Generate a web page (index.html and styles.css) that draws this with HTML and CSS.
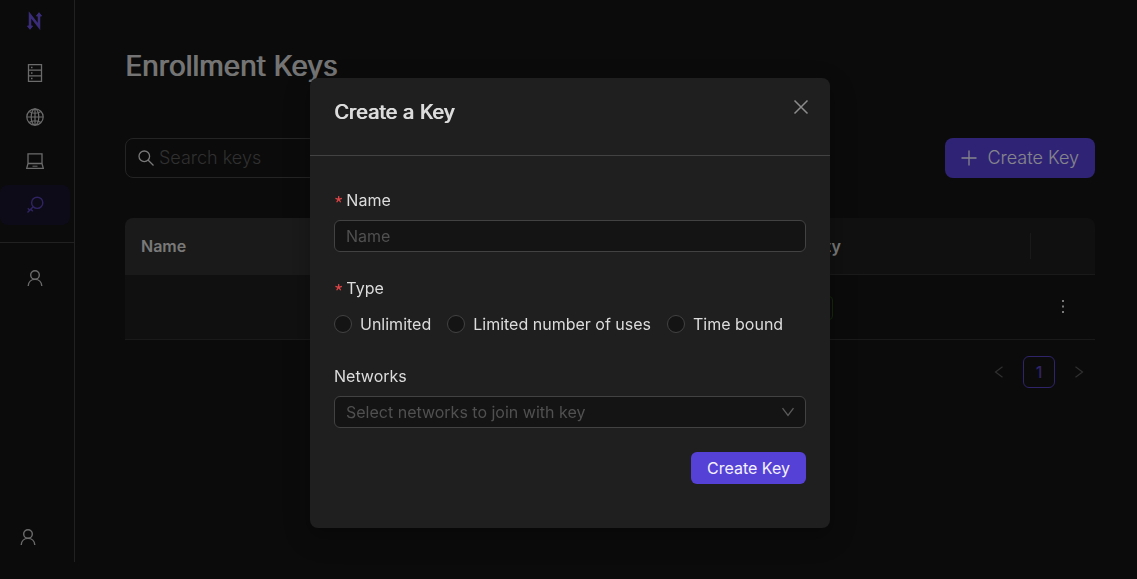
FILE: index.html
```
<!DOCTYPE html>
<html lang="en">
<head>
<meta charset="utf-8">
<title>Enrollment Keys</title>
<link rel="stylesheet" href="styles.css">
</head>
<body>
<div class="app">
  <nav class="sidebar" aria-label="Main">
    <a class="logo" href="#" aria-label="Home">
      <svg width="18" height="20" viewBox="0 0 18 20" fill="none" stroke="currentColor" stroke-width="2.500"><path d="M5 16V4L14 15.500V4"/><path d="M2.500 15L5 18.300L7.500 15zM11.500 5L14 1.700L16.500 5z" fill="currentColor" stroke-width="1"/></svg>
    </a>
    <ul class="menu">
      <li><a class="menu-item" href="#" aria-label="Hosts"><svg width="18" height="18" viewBox="0 0 18 18" fill="none" stroke="currentColor" stroke-width="1.300"><path d="M2.500 .7h13v16.600h-13zM2.500 6.200h13M2.500 11.800h13M5 3.500h1.500M5 9h1.500M5 14.500h1.500"/></svg></a></li>
      <li><a class="menu-item" href="#" aria-label="Networks"><svg width="18" height="18" viewBox="0 0 18 18" fill="none" stroke="currentColor" stroke-width="1.200"><circle cx="9" cy="9" r="8.200"/><ellipse cx="9" cy="9" rx="3.800" ry="8.200"/><path d="M9 1v16M1 9h16M3 3.500c3.500 2.300 8.500 2.300 12 0M3 14.500c3.500-2.300 8.500-2.300 12 0"/></svg></a></li>
      <li><a class="menu-item" href="#" aria-label="Clients"><svg width="18" height="18" viewBox="0 0 18 18" fill="none" stroke="currentColor" stroke-width="1.300"><path d="M2 11.500V1.800h14v9.700M2 11.500h14l1.300 4.800H.7z"/><path d="M6.500 14.200h5" stroke-width="1"/></svg></a></li>
      <li><a class="menu-item active" href="#" aria-label="Enrollment keys"><svg width="18" height="18" viewBox="0 0 18 18" fill="none" stroke="currentColor" stroke-width="1.400"><circle cx="11.200" cy="6.800" r="5.600"/><path d="M7.200 10.800l-5.700 5.700M4.800 13.200l2 2M1.800 12.200l2.200 2.200"/></svg></a></li>
    </ul>
    <ul class="menu users">
      <li><a class="menu-item" href="#" aria-label="Users"><svg width="18" height="18" viewBox="0 0 18 18" fill="none" stroke="currentColor" stroke-width="1.400"><circle cx="9" cy="6" r="4.300"/><path d="M2.200 17c.2-4 3-6.600 6.800-6.600s6.600 2.600 6.800 6.600"/></svg></a></li>
    </ul>
    <a class="account" href="#" aria-label="Account"><svg width="18" height="18" viewBox="0 0 18 18" fill="none" stroke="currentColor" stroke-width="1.400"><circle cx="9" cy="6" r="4.300"/><path d="M2.200 17c.2-4 3-6.600 6.800-6.600s6.600 2.600 6.800 6.600"/></svg></a>
  </nav>
  <main class="content">
    <h1 class="page-title">Enrollment Keys</h1>
    <div class="toolbar">
      <label class="search">
        <svg width="16" height="16" viewBox="0 0 16 16" fill="none" stroke="currentColor" stroke-width="1.300"><circle cx="6.300" cy="6.300" r="5.300"/><path d="M10 10l5.500 5.500"/></svg>
        <input type="search" placeholder="Search keys" aria-label="Search keys">
      </label>
      <button class="button large" type="button"><svg width="16" height="16" viewBox="0 0 16 16" fill="none" stroke="currentColor" stroke-width="1.300"><path d="M8 .5v15M.5 8h15"/></svg>Create Key</button>
    </div>
    <table class="keys">
      <colgroup><col><col class="col-validity"><col class="col-actions"></colgroup>
      <thead><tr><th class="sorted">Name</th><th>Validity</th><th class="split"></th></tr></thead>
      <tbody><tr><td class="sorted"></td><td><span class="tag">Valid</span></td><td class="actions"><button class="more" type="button" aria-label="More"><svg width="16" height="16" viewBox="0 0 16 16" fill="currentColor"><path d="M7 1h2v2H7zM7 6.500h2v2H7zM7 12h2v2H7z"/></svg></button></td></tr></tbody>
    </table>
    <div class="pagination">
      <button class="page" type="button" aria-label="Previous page"><svg width="12" height="12" viewBox="0 0 12 12" fill="none" stroke="currentColor" stroke-width="1.200"><path d="M9.500 .8L2.500 6l7 5.200"/></svg></button>
      <button class="page current" type="button">1</button>
      <button class="page" type="button" aria-label="Next page"><svg width="12" height="12" viewBox="0 0 12 12" fill="none" stroke="currentColor" stroke-width="1.200"><path d="M2.500 .8L9.500 6l-7 5.200"/></svg></button>
    </div>
  </main>
</div>

<div class="mask">
  <section class="modal" role="dialog" aria-labelledby="modal-title">
    <header class="modal-header">
      <h2 id="modal-title">Create a Key</h2>
      <button class="close" type="button" aria-label="Close"><svg width="16" height="16" viewBox="0 0 16 16" fill="none" stroke="currentColor" stroke-width="1.500"><path d="M1.500 1.500l13 13M14.500 1.500l-13 13"/></svg></button>
    </header>
    <form class="modal-body">
      <div class="field">
        <label class="label required" for="key-name">Name</label>
        <input class="control" id="key-name" type="text" placeholder="Name">
      </div>
      <div class="field" role="radiogroup" aria-labelledby="type-label">
        <span class="label required" id="type-label">Type</span>
        <div class="radios">
          <label class="radio"><input type="radio" name="type">Unlimited</label>
          <label class="radio"><input type="radio" name="type">Limited number of uses</label>
          <label class="radio"><input type="radio" name="type">Time bound</label>
        </div>
      </div>
      <div class="field">
        <label class="label" for="networks">Networks</label>
        <div class="select">
          <select class="control" id="networks"><option>Select networks to join with key</option></select>
          <svg class="arrow" width="12" height="12" viewBox="0 0 12 12" fill="none" stroke="currentColor" stroke-width="1.300"><path d="M.5 2.200L6 9.500l5.500-7.300"/></svg>
        </div>
      </div>
      <div class="submit"><button class="button" type="button">Create Key</button></div>
    </form>
  </section>
</div>
</body>
</html>
```
FILE: styles.css
```
* { box-sizing: border-box; }
body {
  margin: 0;
  background: #141414;
  color: #dcdcdc;
  font: 16px/24px Inter, sans-serif;
}
button, input, select { font: inherit; color: inherit; }
button { cursor: pointer; }
svg { display: block; flex: none; }
ul { list-style: none; margin: 0; padding: 0; }

.app { display: flex; min-height: 100vh; }
.sidebar {
  width: 75px;
  flex: none;
  display: flex;
  flex-direction: column;
  margin-bottom: 17px;
  border-right: 1px solid #3c3c3c;
}
.logo { color: #6a50dc; padding: 11px 0 0 25px; height: 53px; }
.menu { display: grid; gap: 4px; }
.menu-item {
  display: flex;
  align-items: center;
  height: 40px;
  margin-right: 4px;
  padding-left: 26px;
  border-radius: 8px;
  color: #c4c4c4;
}
.menu-item.active { background: #19142c; color: #5641b4; }
.users { margin-top: 17px; padding-top: 15px; border-top: 1px solid #3c3c3c; }
.account { margin: auto 0 16px 19px; color: #c4c4c4; }

.content { flex: 1; min-width: 0; padding: 46px 42px 0 50px; }
/* Headings are regular weight, thickened by a one-pixel shadow */
.page-title, .modal-header h2 { margin: 0; font-weight: 400; text-shadow: 1px 0 currentColor; }
.page-title { font-size: 28px; line-height: 40px; color: #d4d4d4; }
.toolbar { display: flex; justify-content: space-between; margin: 52px 0 40px; }
.search {
  display: flex;
  align-items: center;
  gap: 5px;
  width: 400px;
  height: 40px;
  padding: 0 12px;
  border: 1px solid #424242;
  border-radius: 8px;
}
.search input {
  flex: 1;
  min-width: 0;
  padding: 0;
  border: 0;
  outline: 0;
  background: none;
  font-size: 18px;
  font-weight: 300;
}
.search input::placeholder { color: #585858; opacity: 1; }

.button {
  display: flex;
  align-items: center;
  gap: 10px;
  height: 32px;
  padding: 0 16px;
  border: 0;
  border-radius: 6px;
  background: #5641d6;
  color: #f4f2ff;
}
.button.large { height: 40px; border-radius: 8px; font-size: 18px; font-weight: 300; }

.keys { width: 100%; table-layout: fixed; border-collapse: separate; border-spacing: 0; }
.col-validity { width: 263px; }
.col-actions { width: 65px; }
.keys th, .keys td { padding: 0 16px; text-align: left; border-bottom: 1px solid #303030; }
.keys th { height: 57px; background: #1e1e1e; font-weight: 600; }
.keys td { height: 65px; }
.keys th.sorted { background: #303030; border-radius: 8px 0 0 0; }
.keys td.sorted { background: #1e1e1e; }
.keys th.split {
  border-radius: 0 8px 0 0;
  background: linear-gradient(#303030, #303030) 0 50% / 1px 26px no-repeat #1e1e1e;
}
.keys td.actions { padding: 0 25px; }
.tag { display: inline-block; padding: 0 8px; border: 1px solid #274916; border-radius: 4px; color: #6abe39; font-size: 14px; line-height: 22px; }
.more { display: block; padding: 0; border: 0; background: none; }

.pagination { display: flex; justify-content: flex-end; gap: 8px; margin-top: 16px; }
.page {
  display: grid;
  place-items: center;
  width: 32px;
  height: 32px;
  padding: 0;
  border: 0;
  border-radius: 6px;
  background: none;
  color: #585858;
}
.page.current { border: 1px solid #5641c0; color: #5641c0; font-weight: 500; }

.mask {
  position: fixed;
  inset: 0;
  display: flex;
  align-items: flex-start;
  justify-content: center;
  padding: 78px 0 0 3px;
  background: rgba(0, 0, 0, .45);
}
.modal {
  width: 520px;
  border-radius: 8px;
  background: #1f1f1f;
  box-shadow: 0 6px 16px rgba(0, 0, 0, .2), 0 9px 28px 8px rgba(0, 0, 0, .1);
}
.modal-header {
  display: flex;
  justify-content: space-between;
  padding: 20px 21px 29px 24px;
  border-bottom: 1px solid #424242;
}
.modal-header h2 { font-size: 20px; line-height: 28px; }
.close { align-self: flex-start; padding: 1px 0; border: 0; background: none; color: #8c8c8c; }
.modal-body { display: grid; gap: 24px; padding: 32px 24px 44px; }
.field { display: grid; gap: 8px; }
.label { height: 24px; }
.required { display: flex; align-items: center; }
.required::before {
  content: "*";
  margin-right: 3px;
  padding-top: 8px;
  color: #dc4446;
  font-family: "Noto Sans CJK SC", sans-serif;
  font-size: 20px;
}
.control {
  width: 100%;
  height: 32px;
  padding: 0 11px;
  border: 1px solid #424242;
  border-radius: 6px;
  outline: 0;
  background: #141414;
}
.control::placeholder { color: #505050; opacity: 1; }
.radios { display: flex; align-items: center; gap: 16px; height: 32px; }
.radio { display: flex; align-items: center; gap: 8px; }
.radio input {
  appearance: none;
  width: 18px;
  height: 18px;
  margin: 0;
  border: 1px solid #424242;
  border-radius: 50%;
  background: #141414;
}
.select { display: grid; align-items: center; }
.select > * { grid-area: 1 / 1; }
.select select { appearance: none; color: #505050; }
.arrow { justify-self: end; margin-right: 12px; color: #5c5c5c; pointer-events: none; }
.submit { display: flex; justify-content: flex-end; }
```
